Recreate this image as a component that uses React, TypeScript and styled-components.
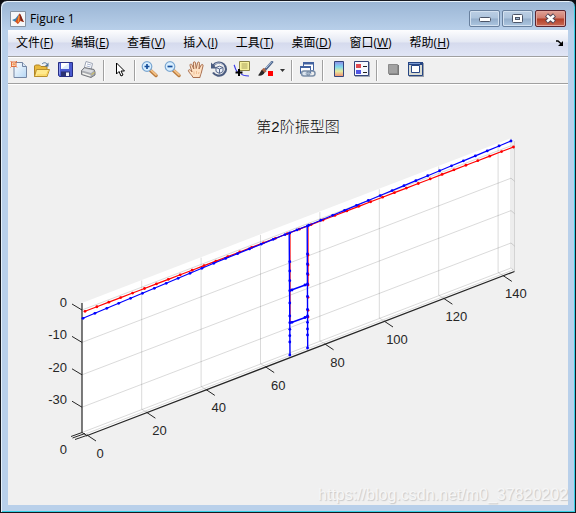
import React from "react";
import styled, { createGlobalStyle } from "styled-components";

const GlobalStyle = createGlobalStyle`
  * { box-sizing: border-box; }
  body { margin: 0; background: #0b0d12; }
  button { font: inherit; color: inherit; }
`;

const Frame = styled.div`
  display: flex;
  flex-direction: column;
  min-height: 100vh;
  padding: 0 6px 7px;
  border: 1px solid #16181f;
  border-radius: 7px 7px 0 0;
  background: linear-gradient(#9ab5d4, #b9d0ea 30px, #b9d0ea);
  box-shadow: inset 1px 1px 0 #e6f1fa, inset -1px -1px 0 #35cfe4;
  font-family: "Open Sans", "Noto Sans CJK SC", sans-serif;
  font-size: 12px;
  color: #000;
`;

const TitleBar = styled.header`
  display: flex;
  align-items: center;
  height: 29px;
  padding: 6px 3px 0;
  gap: 4px;
`;

const Title = styled.h1`
  flex: 1;
  margin: 0;
  font-size: 12px;
  line-height: 16px;
  font-weight: 400;
`;

const WindowButtons = styled.div`
  display: flex;
  gap: 2px;
`;

const WindowButton = styled.button<{ $danger?: boolean }>`
  display: flex;
  align-items: center;
  justify-content: center;
  width: 31px;
  height: 17px;
  padding: 0;
  border: 1px solid ${(p) => (p.$danger ? "#5b2530" : "#68809e")};
  border-radius: 2px;
  box-shadow: inset 0 0 0 1px ${(p) => (p.$danger ? "#e3a49b" : "#d3e1f0")};
  background: ${(p) =>
    p.$danger
      ? "linear-gradient(#dfa196, #d07b6d 48%, #b23c26 52%, #c96c55)"
      : "linear-gradient(#bccfe4, #adc4dd 48%, #94aecb 52%, #adc6e0)"};
`;

const Client = styled.div`
  display: flex;
  flex-direction: column;
  flex: 1;
  margin: 0 1px;
  background: #f0f0f0;
`;

const MenuBar = styled.nav`
  display: flex;
  align-items: center;
  gap: 18px;
  height: 26px;
  padding: 0 4px 0 8px;
  background: linear-gradient(#fdfdfe, #e4e8f3 46%, #d5daed 50%, #e1e6f6);
`;

const MenuItem = styled.button`
  padding: 0;
  border: 0;
  background: none;
  line-height: 18px;
  white-space: nowrap;
`;

const DockButton = styled(MenuItem)`
  display: flex;
  margin-left: auto;
`;

const ToolBar = styled.div`
  display: flex;
  align-items: center;
  height: 28px;
  border-top: 1px solid #a0a0a0;
  border-bottom: 1px solid #a0a0a0;
  box-shadow: inset 0 1px 0 #fff, 0 1px 0 #fff;
`;

const ToolButton = styled.button<{ $narrow?: boolean }>`
  display: flex;
  align-items: center;
  justify-content: center;
  width: ${(p) => (p.$narrow ? 11 : 23)}px;
  height: 23px;
  padding: 0;
  border: 0;
  background: none;
`;

const Separator = styled.span`
  width: 8px;
  height: 21px;
  background: linear-gradient(90deg, transparent 3px, #a0a0a0 3px, #a0a0a0 4px, #fff 4px, #fff 5px, transparent 5px);
`;

const Canvas = styled.main`
  position: relative;
  flex: 1;
`;

const Plot = styled.svg`
  display: block;
  width: 100%;
  height: auto;
  font-family: "Liberation Sans", "Noto Sans CJK SC", sans-serif;
`;

const Watermark = styled.span`
  position: absolute;
  right: 0;
  bottom: 0;
  font-family: "Liberation Sans", sans-serif;
  font-size: 16px;
  line-height: 20px;
  color: #f6f6f6;
  text-shadow: 1px 1px 1px #c8c8c8;
`;

const IconSvg = ({ children }: { children: React.ReactNode }) => (
  <svg width="19" height="19" viewBox="0 0 19 19" fill="none" aria-hidden="true">
    {children}
  </svg>
);

const NewIcon = () => (
  <IconSvg>
    <defs>
      <linearGradient id="paper" x1="0" y1="0" x2="1" y2="1">
        <stop offset="0" stopColor="#fff" />
        <stop offset="1" stopColor="#b4d6f4" />
      </linearGradient>
    </defs>
    <path d="M4 1.5h8.5l4 4v11H4z" fill="url(#paper)" stroke="#7486a3" />
    <path d="M12.5 1.5v4h4" fill="#dbe9f7" stroke="#7486a3" />
    <path d="M1.5 1h4.500v4.500H1.500z" fill="#fbe3d4" stroke="#e2713f" />
    <path d="M.5 0l1.500 1.500M7 0 5.500 1.500M.5 6.500 2 5M7 6.500 5.500 5" stroke="#e2713f" />
    <circle cx="3.800" cy="3.200" r="1.300" fill="#f2a05e" />
  </IconSvg>
);

const OpenIcon = () => (
  <IconSvg>
    <path d="M1.5 15.5V5l1-1h4l1.5 1.5h6v10z" fill="#e9b93c" stroke="#b08424" />
    <path d="M3.5 8.5h13l-2.5 7H1.5z" fill="#ffe98d" stroke="#b98f2c" />
    <path d="M4 14h9.500l1.500-4" stroke="#f8d052" />
    <path d="M9 3c2-2 4-1.500 5.500.5" stroke="#55779b" />
    <path d="M15.500 1.500v4h-4z" fill="#55779b" />
  </IconSvg>
);

const SaveIcon = () => (
  <IconSvg>
    <path d="M2.500 1.500h14v14h-13l-1-1z" fill="#4a5ad0" stroke="#272e83" />
    <path d="M5 2h8v6H5z" fill="#dceafc" />
    <path d="M5 2h8L5 8z" fill="#fff" />
    <path d="M5 10.500h9V15H5z" fill="#2b3170" />
    <path d="M10 11.500h3V15h-3z" fill="#f2f4fb" />
    <path d="M3.500 2.500v11" stroke="#8c9af0" />
  </IconSvg>
);

const PrintIcon = () => (
  <IconSvg>
    <path d="M5 8 7 .5l6.500 2L12 9z" fill="#fff" stroke="#9ba3b4" />
    <path d="m8 3 4 1M7.500 5l4 1" stroke="#a8b5cf" />
    <path d="m2.500 9.500 3-3 9.500 2 1 2.500v3l-4 2.500-9.500-3z" fill="#a8abb0" stroke="#77797e" />
    <path d="m3 9.500 2.500-2 9.500 2-3 2.500z" fill="#dadce0" />
    <path d="m3.500 11.500 8 2.500v1.500l-8-2.500z" fill="#f5f5f0" />
    <path d="m12.500 13.500 3-2" stroke="#d8c54e" />
  </IconSvg>
);

const PointerIcon = () => (
  <IconSvg>
    <path d="M6.500 2v11l2.500-2.500 2 4.500 2-1-2-4h3.500z" fill="#fff" stroke="#000" />
  </IconSvg>
);

const Magnifier = ({ plus }: { plus?: boolean }) => (
  <IconSvg>
    <path d="m9.500 9.500 5.500 5" stroke="#b97a3c" strokeWidth="3.500" strokeLinecap="round" />
    <path d="m10 9.200 5 4.600" stroke="#f5c388" strokeWidth="1.800" strokeLinecap="round" />
    <circle cx="6" cy="5.500" r="4.800" fill="#d9efff" stroke="#7ba6d0" strokeWidth="1.200" />
    <path d={plus ? "M3.500 5.500h5M6 3v5" : "M3.500 5.500h5"} stroke="#164e9b" strokeWidth="1.700" />
  </IconSvg>
);

const HandIcon = () => (
  <IconSvg>
    <path
      d="M6 16.500c-.5-2-3.500-4-4.500-6.500-.5-1.500 1.500-1.800 2.300-.5L5 11 3 4.500C2.600 3 4.500 2.500 5 4l1.800 4L6.300 2c0-1.600 2-1.600 2.200 0l.7 5.500L10.500 2c.3-1.500 2.200-1.200 2 .3L12 8l2.200-4c.8-1.300 2.300-.5 1.800 1l-1.500 6c-.3 2-1.500 3.500-1.500 5.500z"
      fill="#ffe2c4"
      stroke="#a96f50"
    />
    <path d="M7 10.500v3M9.500 10v3M12 11l-.5 2" stroke="#eebc93" />
  </IconSvg>
);

const RotateIcon = () => (
  <IconSvg>
    <path d="M3.200 4.500A7 6.500 0 1 1 3 11.500" stroke="#4b5c80" strokeWidth="2.200" />
    <path d="M4.500 3.500A6 5.500 0 0 1 14 5" stroke="#c0cade" />
    <path d="M1 1.500v6h6z" fill="#4b5c80" />
    <path d="m6 6.500 3.500-1.300L13 6.500v4L9.500 12.500 6 10.500z" fill="#edf2fa" stroke="#53648a" />
    <path d="m6 6.500 3.500 1.500L13 6.500M9.500 8v4" stroke="#53648a" />
  </IconSvg>
);

const DataCursorIcon = () => (
  <IconSvg>
    <path d="M1 4c1 1 1 5 3.500 7M8 12.500c1 1.500 3 2.500 8 2.500" stroke="#3838e8" strokeWidth="1.200" />
    <path d="M6.500.5h10v9h-10z" fill="#f7f2a0" stroke="#8b8449" />
    <path d="M8.500 3h6M8.500 5h6M8.500 7h6" stroke="#aaa25c" />
    <path d="M6 8v7M2.500 11.500h7" stroke="#000" strokeWidth="2" />
  </IconSvg>
);

const BrushIcon = () => (
  <IconSvg>
    <path d="m9 9 7-8" stroke="#4d658d" strokeWidth="2.600" strokeLinecap="round" />
    <path d="m10 7 6-6.500" stroke="#b3c7df" />
    <path d="M9 7.500 7.500 7 5 9.500l2.500 3 3-2z" fill="#ad6649" />
    <path d="M6 9c-1.500 1-2 3-4 5.500 3 .5 6-.5 6.500-3z" fill="#292929" />
    <path d="M12 10h5v5h-5z" fill="#f00" />
  </IconSvg>
);

const LinkIcon = () => (
  <IconSvg>
    <path d="M5.500 1.500h10v8h-10z" fill="#fff" stroke="#4262a0" />
    <path d="M5 1h11v2.500H5z" fill="#4262a0" />
    <path d="M2.500 5.500h10v7h-10z" fill="#fff" stroke="#4262a0" />
    <path d="M2 5h11v2H2z" fill="#4262a0" />
    <rect x="3.500" y="10" width="8" height="5" rx="2.500" fill="#dce5ef" stroke="#7b8fa8" strokeWidth="1.500" />
    <rect x="9" y="10" width="8" height="5" rx="2.500" stroke="#7b8fa8" strokeWidth="1.500" />
    <path d="M7.500 12.500h6" stroke="#a5b6c9" strokeWidth="1.500" />
  </IconSvg>
);

const ColorbarIcon = () => (
  <IconSvg>
    <defs>
      <linearGradient id="jet" x1="0" y1="0" x2="0" y2="1">
        <stop offset="0" stopColor="#8e8ce8" />
        <stop offset=".35" stopColor="#7ed7ee" />
        <stop offset=".65" stopColor="#e4eda0" />
        <stop offset="1" stopColor="#f28b72" />
      </linearGradient>
    </defs>
    <path d="M5.500.5h9v15h-9z" fill="url(#jet)" stroke="#34467b" />
  </IconSvg>
);

const LegendIcon = () => (
  <IconSvg>
    <path d="M3 1h15v15H3z" fill="#a3a9b5" />
    <path d="M2.500.5h14v14h-14z" fill="#f6f8ff" stroke="#34467b" />
    <path d="M4 3h5v4H4z" fill="#e04a50" />
    <path d="M4 9h5v4H4z" fill="#5156e3" />
    <path d="M11 5.500h4M11 11.500h4" stroke="#222" />
  </IconSvg>
);

const HideToolsIcon = () => (
  <IconSvg>
    <path d="M6 4h10v10H6z" fill="#777" />
    <path d="M5.500 3.500h9v9h-9z" fill="#a2a2a2" stroke="#8b8b8b" />
  </IconSvg>
);

const ShowToolsIcon = () => (
  <IconSvg>
    <path d="M3 2h15v14H3z" fill="#9aa0aa" />
    <path d="M2.500 1.500h14v13h-14z" fill="#d9dbd2" stroke="#274684" />
    <path d="M2 1h15v3H2z" fill="#274684" />
    <path d="M3 2.500h11" stroke="#7c9bd2" />
    <path d="M5.500 4.500h8v7h-8z" fill="#fff" stroke="#274684" />
  </IconSvg>
);

const MatlabIcon = () => (
  <svg width="16" height="16" viewBox="0 0 16 16" aria-hidden="true">
    <path d="M.5.5h15v15H.5z" fill="#f5f7f9" stroke="#8693a2" />
    <path d="m2 9 3.500-1.500L9 3 7.500 9.500 5.500 11z" fill="#3e81ad" />
    <path d="M9.500 2.500C8.500 4 7.500 8 5 11c1.500 0 2 2 3 2l2.500-3 3.500 1c-2-3-3-7.500-4.500-8.500z" fill="#d75420" />
    <path d="M9.500 2.500c.3 3 .5 5 1.500 7.500l3 1c-2-3-3-7.500-4.500-8.500z" fill="#7e2419" />
    <path d="m9 5-.7 6" stroke="#f6a340" />
  </svg>
);

const menus = [
  ["文件", "F"],
  ["编辑", "E"],
  ["查看", "V"],
  ["插入", "I"],
  ["工具", "T"],
  ["桌面", "D"],
  ["窗口", "W"],
  ["帮助", "H"],
];

type Tool = [string, React.ReactNode];
const toolGroups: Tool[][] = [
  [
    ["新建", <NewIcon />],
    ["打开", <OpenIcon />],
    ["保存", <SaveIcon />],
    ["打印", <PrintIcon />],
  ],
  [["编辑绘图", <PointerIcon />]],
  [
    ["放大", <Magnifier plus />],
    ["缩小", <Magnifier />],
    ["平移", <HandIcon />],
    ["三维旋转", <RotateIcon />],
    ["数据游标", <DataCursorIcon />],
    ["刷亮", <BrushIcon />],
    ["刷亮选项", null],
  ],
  [["链接绘图", <LinkIcon />]],
  [
    ["颜色栏", <ColorbarIcon />],
    ["图例", <LegendIcon />],
  ],
  [
    ["隐藏绘图工具", <HideToolsIcon />],
    ["显示绘图工具", <ShowToolsIcon />],
  ],
];

type Point = [number, number];

// Plot geometry is expressed in the units of the svg viewBox.
const xTicks = [0, 20, 40, 60, 80, 100, 120, 140].map((value, i) => ({
  value,
  x: 79 + i * 59.4,
  y: 351 - i * 22.8,
}));
const zTicks = [0, -10, -20, -30].map((value, i) => ({ value, y: 226 + i * 32.4 }));

const blueKnots: Point[] = [[75, 234.3], [212, 176.7], [281, 149], [299, 142], [392, 103.3], [503, 57]];

const blueAt = (x: number) => {
  const i = Math.max(1, blueKnots.findIndex((k) => k[0] >= x));
  const [x0, y0] = blueKnots[i - 1];
  const [x1, y1] = blueKnots[i];
  return y0 + ((x - x0) / (x1 - x0)) * (y1 - y0);
};

const steps = Array.from({ length: 37 }, (_, i) => i);
const redDots: Point[] = steps.map((i) => [77 + (i * 428.5) / 36, 227.3 - (i * 164.3) / 36]);
const blueDots: Point[] = steps.map((i) => {
  const x = 75 + (i * 428) / 36;
  return [x, blueAt(x)];
});
const leftPier = [149, 177.7, 187, 196.7, 206.7, 219, 232, 238.7, 245.3, 251.7, 258, 271];
const rightPier = [142, 170, 180, 189.7, 200, 212.3, 225.3, 232, 238.3, 245, 251, 264];

const toPoints = (list: Point[]) => list.map((p) => p.join(",")).join(" ");

const Dots = ({ points, color }: { points: Point[]; color: string }) => (
  <>
    {points.map(([x, y], i) => (
      <circle key={i} cx={x} cy={y} r="1.4" fill={color} />
    ))}
  </>
);

const ModeShapePlot = () => (
  <Plot viewBox="0 0 560 420" role="img" aria-label="第2阶振型图">
    <text x="290" y="48" fontSize="15" textAnchor="middle" fontWeight="300" fill="#111">
      第2阶振型图
    </text>
    <path d="M74 219 503 54l3.500 3v130.500L78 352l-4-3z" fill="#fff" />
    <g stroke="#262626" strokeOpacity=".17" fill="none">
      {xTicks.slice(1).map((t, i) => (
        <path key={t.value} d={`M${t.x} ${t.y}l-4.700-3V${196.5 - i * 22.8}`} />
      ))}
      {zTicks.map((t) => (
        <path key={t.value} d={`M74 ${t.y}l429-164.200l3.500 3`} />
      ))}
      <path d="M74 348.500 503 184l3.500 3M76 350.500 505 186M503 54v130M505 56v130M506.500 57v130" />
    </g>
    <g stroke="#262626" fill="none">
      <path d="M74 219v129.500M78 352 506.500 187.500" strokeWidth="1.200" />
      <path d="M63 352.500 74 348.500M64.500 354 77 349.500M67 355.500 80 351M74 348.500l5 3" />
      {xTicks.map((t) => (
        <path key={t.value} d={`M${t.x} ${t.y}l9 6`} />
      ))}
      {zTicks.map((t) => (
        <path key={t.value} d={`M64 ${t.y - 6}l10 6`} />
      ))}
    </g>
    <g fill="#262626" fontSize="13">
      {xTicks.map((t) => (
        <text key={t.value} x={t.x + 13} y={t.y + 23} textAnchor="middle">
          {t.value}
        </text>
      ))}
      {zTicks.map((t) => (
        <text key={t.value} x="59" y={t.y - 3} textAnchor="end">
          {t.value}
        </text>
      ))}
      <text x="59" y="370" textAnchor="end">
        0
      </text>
    </g>
    <g stroke="#f00" fill="none">
      <polyline points={toPoints(redDots)} strokeWidth="1.200" />
      <path d="M282.500 149v90M300.500 142v60" strokeOpacity=".6" />
    </g>
    <Dots points={redDots} color="#f00" />
    <Dots points={rightPier.slice(1, 8).map((y): Point => [300, y + 1])} color="#f00" />
    <g stroke="#00f" fill="none" strokeWidth="1.400">
      <polyline points={toPoints(blueDots)} strokeWidth="1.200" />
      <path d="M281.200 149 282 271M299.200 142 299.700 264M282 206.500 300 200M282 239 300 232.500" />
    </g>
    <Dots points={blueDots} color="#00f" />
    <Dots points={leftPier.map((y): Point => [281.8, y])} color="#00f" />
    <Dots points={rightPier.map((y): Point => [299.5, y])} color="#00f" />
    <Dots points={[[284, 206], [297, 201], [284, 238.3], [297, 233.5]]} color="#00f" />
  </Plot>
);

export default function App() {
  return (
    <>
      <GlobalStyle />
      <Frame>
        <TitleBar>
          <MatlabIcon />
          <Title>Figure 1</Title>
          <WindowButtons>
            <WindowButton aria-label="最小化">
              <svg width="12" height="6" viewBox="0 0 12 6">
                <rect x=".5" y="1.500" width="11" height="4" rx="1" fill="#fff" stroke="#4c5568" />
              </svg>
            </WindowButton>
            <WindowButton aria-label="最大化">
              <svg width="11" height="9" viewBox="0 0 11 9">
                <rect x=".5" y=".5" width="10" height="8" rx="1" fill="#fff" stroke="#4c5568" />
                <rect x="3.500" y="3.500" width="4" height="2" fill="#9db5d0" stroke="#4c5568" />
              </svg>
            </WindowButton>
            <WindowButton aria-label="关闭" $danger>
              <svg width="13" height="11" viewBox="0 0 13 11">
                <path d="m2.500 2 8 7M10.500 2l-8 7" stroke="#4f4554" strokeWidth="4.500" />
                <path d="m3 2.500 7 6M10 2.500l-7 6" stroke="#fff" strokeWidth="2.500" />
              </svg>
            </WindowButton>
          </WindowButtons>
        </TitleBar>
        <Client>
          <MenuBar>
            {menus.map(([label, key]) => (
              <MenuItem key={key}>
                {label}(<u>{key}</u>)
              </MenuItem>
            ))}
            <DockButton aria-label="停靠">
              <svg width="8" height="7" viewBox="0 0 8 7">
                <path d="M0 1h2l3.500 3" stroke="#000" strokeWidth="1.500" fill="none" />
                <path d="M7 1v5H2z" fill="#000" />
              </svg>
            </DockButton>
          </MenuBar>
          <ToolBar role="toolbar">
            {toolGroups.map((group, g) => (
              <React.Fragment key={g}>
                {g > 0 && <Separator />}
                {group.map(([label, icon]) => (
                  <ToolButton key={label} aria-label={label} $narrow={!icon}>
                    {icon ?? (
                      <svg width="5" height="3" viewBox="0 0 5 3">
                        <path d="M0 0h5L2.500 3z" fill="#333" />
                      </svg>
                    )}
                  </ToolButton>
                ))}
              </React.Fragment>
            ))}
          </ToolBar>
          <Canvas>
            <ModeShapePlot />
            <Watermark>https://blog.csdn.net/m0_37820202</Watermark>
          </Canvas>
        </Client>
      </Frame>
    </>
  );
}
